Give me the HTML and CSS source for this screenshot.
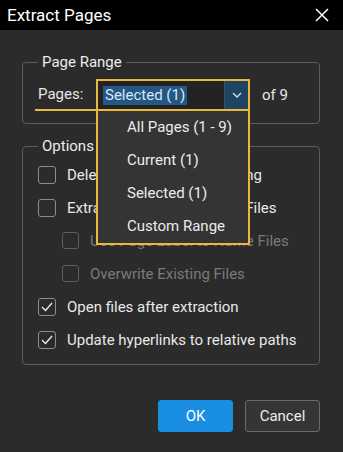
FILE: index.html
```html
<!DOCTYPE html>
<html>
<head>
<meta charset="UTF-8">
<link rel="stylesheet" href="styles.css">
</head>
<body>
<div class="titlebar">
	<span class="title">Extract Pages</span>
	<svg class="close" width="14" height="14" viewBox="0 0 14 14"><path d="M1 1L13 13M13 1L1 13" stroke="#fff" stroke-width="1.5" fill="none"/></svg>
</div>
<div class="dialog">
	<fieldset class="group range">
		<legend>Page Range</legend>
		<div class="range-row">
			<label class="pages-label">Pages:</label>
			<div class="combo">
				<div class="combo-text"><span class="sel">Selected (1)</span></div>
				<div class="combo-arrow">
					<svg width="10" height="6" viewBox="0 0 10 6"><path d="M1 1L5 5L9 1" stroke="#cfe3f5" stroke-width="1.3" fill="none"/></svg>
				</div>
				<div class="popup">
					<div class="item">All Pages (1 - 9)</div>
					<div class="item">Current (1)</div>
					<div class="item">Selected (1)</div>
					<div class="item">Custom Range</div>
				</div>
			</div>
			<span class="of">of 9</span>
		</div>
	</fieldset>
	<fieldset class="group options">
		<legend>Options</legend>
		<div class="opt"><span class="box"></span>Delete Pages After Extracting</div>
		<div class="opt"><span class="box"></span>Extract Pages as Separate Files</div>
		<div class="opt sub off"><span class="box"></span>Use Page Label to Name Files</div>
		<div class="opt sub off"><span class="box"></span>Overwrite Existing Files</div>
		<div class="opt"><span class="box on"><svg width="12" height="10" viewBox="0 0 12 10"><path d="M1 5L4.5 8.5L11 1" stroke="#f0f0f0" stroke-width="1.3" fill="none"/></svg></span>Open files after extraction</div>
		<div class="opt"><span class="box on"><svg width="12" height="10" viewBox="0 0 12 10"><path d="M1 5L4.5 8.5L11 1" stroke="#f0f0f0" stroke-width="1.3" fill="none"/></svg></span>Update hyperlinks to relative paths</div>
	</fieldset>
	<div class="buttons">
		<button class="btn ok">OK</button>
		<button class="btn cancel">Cancel</button>
	</div>
</div>
</body>
</html>
```

FILE: styles.css
```css
* {
	margin: 0;
	padding: 0;
	box-sizing: border-box;
}
body {
	width: 343px;
	height: 452px;
	overflow: hidden;
	background: #2b2b2b;
	color: #e8e8e8;
	font-family: Roboto, "Liberation Sans", sans-serif;
	font-size: 15px;
}
.titlebar {
	height: 30px;
	background: #000;
	display: flex;
	align-items: center;
	justify-content: space-between;
	padding: 0 14px 0 7px;
}
.title {
	font-size: 17px;
	color: #fff;
}
.dialog {
	padding: 24px 23px 0 22px;
}
.group {
	border: 1px solid #5c5c5c;
	border-radius: 4px;
	min-width: 0;
}
.group legend {
	padding: 0 4px;
	line-height: 16px;
	font-size: 15px;
	color: #ececec;
}
.range {
	padding: 9px 0 12px 12px;
}
.range legend {
	margin-left: 3px;
}
.range-row {
	display: flex;
	align-items: center;
}
.pages-label {
	width: 62px;
	height: 32px;
	display: flex;
	align-items: center;
	padding-left: 3px;
	border-bottom: 2px solid #e8b93c;
}
.combo {
	position: relative;
	width: 154px;
	height: 32px;
	border: 2px solid #e8b93c;
	display: flex;
	background: #232323;
	margin-left: -1px;
}
.combo-text {
	flex: 1;
	display: flex;
	align-items: center;
	padding-left: 5px;
}
.sel {
	background: #255785;
	color: #d6e8f8;
	padding: 1px 2px;
	line-height: 17px;
}
.combo-arrow {
	width: 24px;
	background: #1f4363;
	border-left: 1px solid #2f5575;
	display: flex;
	align-items: center;
	justify-content: center;
}
.popup {
	position: absolute;
	left: -2px;
	top: 30px;
	width: 154px;
	background: #343434;
	border: 2px solid #e8b93c;
	border-top: 0;
}
.item {
	height: 33px;
	line-height: 33px;
	padding-left: 29px;
	color: #ececec;
}
.of {
	margin-left: 12px;
}
.options {
	margin-top: 14px;
	padding: 4px 0 8px 15px;
}
.options legend {
	margin-left: 0;
}
.opt {
	height: 33px;
	display: flex;
	align-items: center;
}
.box {
	width: 18px;
	height: 18px;
	border: 1.5px solid #8c8c8c;
	border-radius: 3px;
	margin-right: 11px;
	display: flex;
	align-items: center;
	justify-content: center;
}
.sub {
	padding-left: 24px;
}
.sub .box {
	width: 17px;
	height: 17px;
}
.off {
	color: #7a7a7a;
}
.off .box {
	border-color: #5e5e5e;
}
.buttons {
	display: flex;
	justify-content: flex-end;
	gap: 12px;
	margin-top: 35px;
}
.btn {
	width: 75px;
	height: 32px;
	border-radius: 3px;
	font-family: Roboto, "Liberation Sans", sans-serif;
	font-size: 15px;
}
.ok {
	background: #1a8ee2;
	border: 1px solid #1a8ee2;
	color: #fff;
}
.cancel {
	background: #353535;
	border: 1px solid #6a6a6a;
	color: #ececec;
}
```
